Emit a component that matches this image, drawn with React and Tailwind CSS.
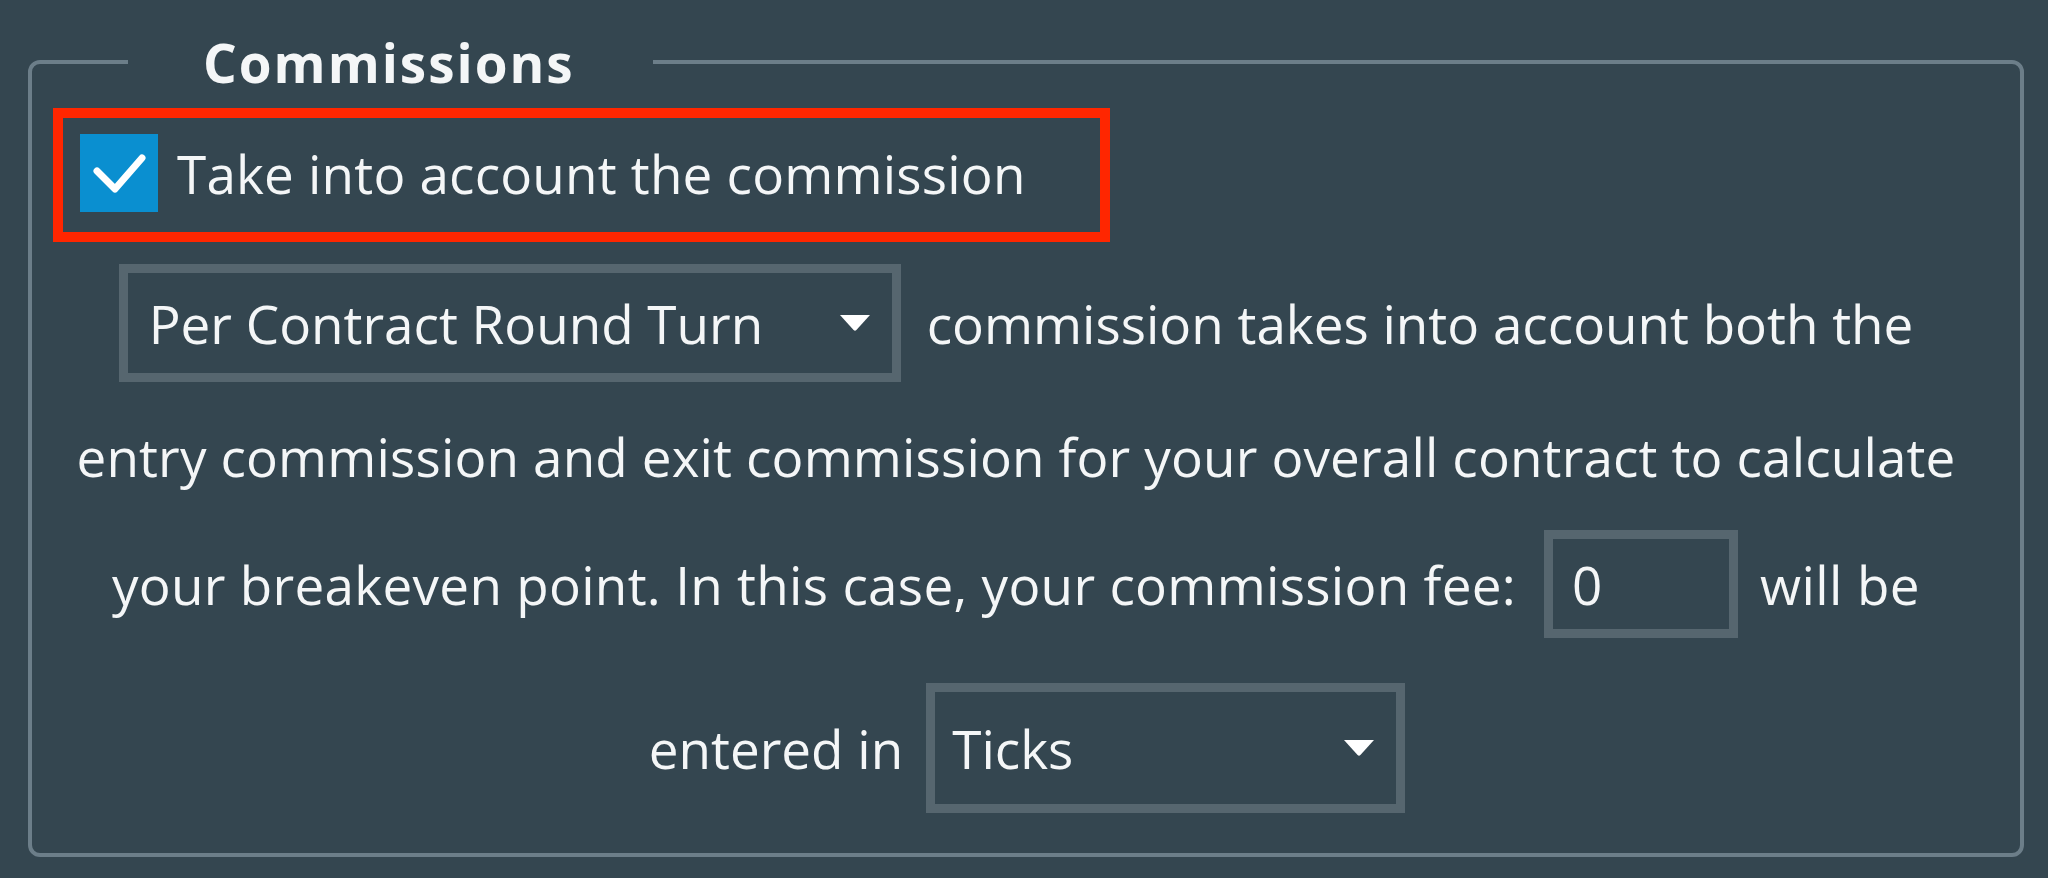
import React from "react";

function Arrow() {
  return (
    <svg width="30" height="16" viewBox="0 0 30 16" className="shrink-0">
      <path d="M0 0 H30 L16.4 15 Q15 16.4 13.6 15 Z" fill="#ffffff" />
    </svg>
  );
}

function Dropdown({ label, w, h, pl }) {
  return (
    <div
      className={`${w} ${h} ${pl} shrink-0 border-[9px] border-[#56666f] flex items-center justify-between pr-[22px]`}
    >
      <span>{label}</span>
      <Arrow />
    </div>
  );
}

export default function App() {
  return (
    <div className="w-[2048px] h-[878px] bg-[#344650] overflow-hidden pt-[60px] font-['Open_Sans',sans-serif] text-[53px] leading-[53px] text-[#f4f6f7] whitespace-nowrap">
      <div className="relative ml-[28px] mr-[24px] h-[797px] rounded-[12px] border-4 border-[#6c7e89]">
        <div className="absolute left-[96px] top-[-2px] -translate-y-1/2 bg-[#344650] pl-[75px] pr-[78px] font-bold tracking-[2px]">
          Commissions
        </div>

        <div className="pl-[21px] pt-[44px]">
          <div className="w-[1057px] h-[134px] border-[10px] border-[#ff2600] flex items-center pl-[17px] pb-[4px] gap-[19px]">
            <div className="w-[78px] h-[78px] bg-[#0a8fd0] shrink-0">
              <svg width="78" height="78" viewBox="0 0 78 78">
                <polyline
                  points="17,37 35,55 62,24"
                  fill="none"
                  stroke="#ffffff"
                  strokeWidth="7"
                  strokeLinecap="round"
                  strokeLinejoin="round"
                />
              </svg>
            </div>
            <span className="tracking-[0.2px]">Take into account the commission</span>
          </div>
        </div>

        <div className="pr-[20px] flex flex-col">
          <div className="mt-[22px] h-[118px] flex items-center justify-center gap-[26px]">
            <Dropdown label="Per Contract Round Turn" w="w-[782px]" h="h-[118px]" pl="pl-[21px]" />
            <span>commission takes into account both the</span>
          </div>

          <div className="mt-[48px] h-[53px] flex justify-center">
            <span className="tracking-[0.15px]">entry commission and exit commission for your overall contract to calculate</span>
          </div>

          <div className="mt-[47px] h-[108px] flex items-center justify-center">
            <span className="tracking-[0.3px]">your breakeven point. In this case, your commission fee:</span>
            <div className="ml-[28px] mr-[22px] w-[194px] h-[108px] shrink-0 border-[9px] border-[#56666f] flex items-center pl-[19px]">
              0
            </div>
            <span className="tracking-[0.4px]">will be</span>
          </div>

          <div className="mt-[45px] h-[130px] flex items-center justify-center gap-[23px] pl-[22px]">
            <span>entered in</span>
            <Dropdown label="Ticks" w="w-[479px]" h="h-[130px]" pl="pl-[17px]" />
          </div>
        </div>
      </div>
    </div>
  );
}
